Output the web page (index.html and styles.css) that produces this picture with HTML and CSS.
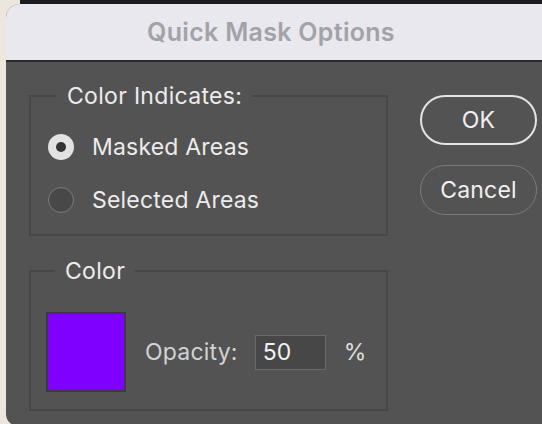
FILE: index.html
```html
<!DOCTYPE html>
<html>
<head>
<meta charset="utf-8">
<link rel="stylesheet" href="styles.css">
</head>
<body>
<div class="topbar"></div>
<div class="dialog">
  <div class="titlebar">Quick Mask Options</div>
  <div class="content">
    <div class="groups">
      <fieldset class="group group-indicates">
        <legend class="legend">Color Indicates:</legend>
        <div class="radio-row">
          <span class="radio radio-on"><span class="radio-dot"></span></span>
          <span class="label">Masked Areas</span>
        </div>
        <div class="radio-row">
          <span class="radio radio-off"></span>
          <span class="label">Selected Areas</span>
        </div>
      </fieldset>
      <fieldset class="group group-color">
        <legend class="legend">Color</legend>
        <div class="color-row">
          <div class="swatch"></div>
          <span class="opacity-label">Opacity:</span>
          <div class="input">50</div>
          <span class="percent">%</span>
        </div>
      </fieldset>
    </div>
    <div class="buttons">
      <div class="btn btn-default">OK</div>
      <div class="btn btn-cancel">Cancel</div>
    </div>
  </div>
</div>
</body>
</html>
```
FILE: styles.css
```css
html, body {
  margin: 0;
  padding: 0;
}
body {
  width: 542px;
  height: 424px;
  overflow: hidden;
  background: #ece6dc;
  font-family: Inter, "Liberation Sans", sans-serif;
}
.topbar {
  height: 4px;
  margin-left: 20px;
  background: #1c1c1c;
}
.dialog {
  margin-left: 6px;
  width: 560px;
  height: 422px;
  background: #535353;
  border-radius: 14px 0 0 12px;
  overflow: hidden;
}
.titlebar {
  height: 56px;
  background: #e8e8ee;
  border-bottom: 2px solid #2a2a2a;
  display: flex;
  align-items: center;
  justify-content: center;
  padding-right: 30px;
  font-size: 25px;
  font-weight: 600;
  letter-spacing: 0.3px;
  color: #a2a2a7;
  box-sizing: content-box;
}
.content {
  display: flex;
  padding: 22px 0 0 23px;
  gap: 32px;
}
.groups {
  display: flex;
  flex-direction: column;
  gap: 23px;
  width: 359px;
}
.group {
  margin: 0;
  padding: 0 0 0 17px;
  border: 2px solid #474747;
  min-inline-size: 0;
}
.legend {
  margin-left: 9px;
  padding: 0 10px;
  font-size: 23px;
  letter-spacing: 0.3px;
  line-height: 24px;
  color: #ececec;
}
.group-indicates {
  padding-top: 19px;
  padding-bottom: 14px;
  display: flex;
  flex-direction: column;
  gap: 13px;
}
.radio-row {
  display: flex;
  align-items: center;
  gap: 18px;
  height: 40px;
}
.radio {
  width: 26px;
  height: 26px;
  border-radius: 50%;
  box-sizing: border-box;
  display: flex;
  align-items: center;
  justify-content: center;
}
.radio-on {
  background: #e2e2e2;
}
.radio-dot {
  width: 10px;
  height: 10px;
  border-radius: 50%;
  background: #333333;
}
.radio-off {
  background: #484848;
  border: 1.5px solid #7c7c7c;
}
.label {
  font-size: 23px;
  letter-spacing: 0.2px;
  color: #ececec;
}
.group-color {
  padding-left: 15px;
  padding-top: 29px;
  padding-bottom: 17px;
}
.color-row {
  display: flex;
  align-items: center;
}
.swatch {
  width: 80px;
  height: 80px;
  box-sizing: border-box;
  background: #7f00ff;
  border: 2px solid #3e3646;
}
.opacity-label {
  margin-left: 19px;
  font-size: 23px;
  letter-spacing: 0.2px;
  color: #d2d2d2;
}
.input {
  margin-left: 17px;
  width: 71px;
  height: 35px;
  box-sizing: border-box;
  background: #474747;
  border: 1.5px solid #6a6a6a;
  padding-left: 7px;
  display: flex;
  align-items: center;
  font-size: 23px;
  color: #f2f2f2;
}
.percent {
  margin-left: 18px;
  font-size: 23px;
  color: #dedede;
}
.buttons {
  display: flex;
  flex-direction: column;
  gap: 20px;
  padding-top: 11px;
}
.btn {
  width: 117px;
  height: 50px;
  box-sizing: border-box;
  border-radius: 25px;
  display: flex;
  align-items: center;
  justify-content: center;
  font-size: 23px;
  letter-spacing: 0.2px;
  color: #f0f0f0;
}
.btn-default {
  border: 2px solid #e4e4e4;
}
.btn-cancel {
  border: 1.5px solid #7b7b7b;
}
```
